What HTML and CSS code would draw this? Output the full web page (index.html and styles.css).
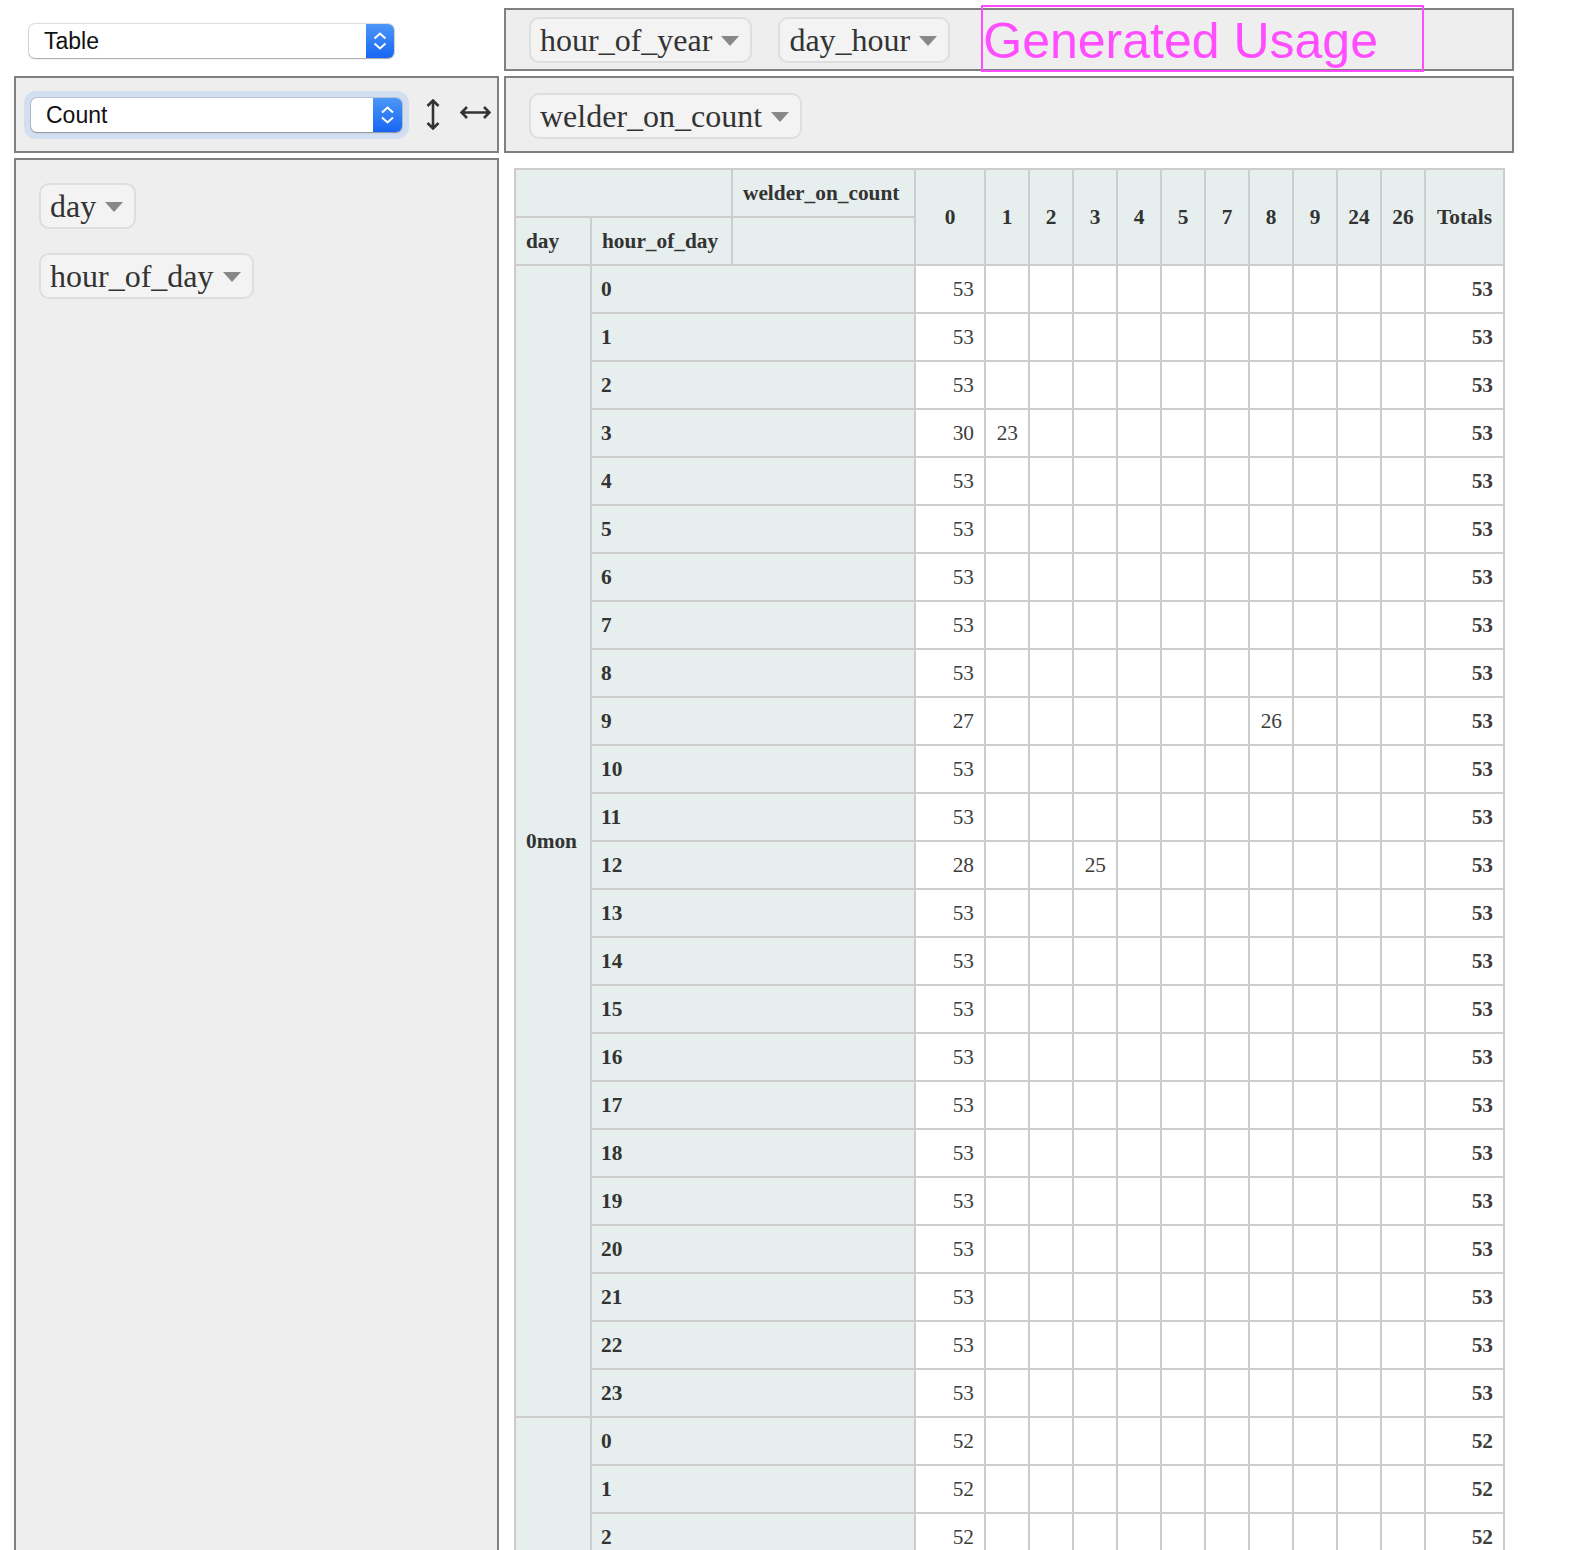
FILE: index.html
```html
<!DOCTYPE html>
<html>
<head>
<meta charset="utf-8">
<title>Pivot</title>
<link rel="stylesheet" href="styles.css">
</head>
<body>
<div class="page">
<div class="pvtUi">
  <div class="cell renderers">
    <div class="sel sel-table">
      <span class="sel-text">Table</span>
      <span class="step"><svg width="28" height="34" viewBox="0 0 28 34"><polyline points="8.5,14.5 14,9.5 19.5,14.5" fill="none" stroke="#fff" stroke-width="2"/><polyline points="8.5,19.5 14,24.5 19.5,19.5" fill="none" stroke="#fff" stroke-width="2"/></svg></span>
    </div>
  </div>
  <div class="cell box unused">
    <span class="pvtAttr">hour_of_year<span class="tri"></span></span>
    <span class="pvtAttr">day_hour<span class="tri"></span></span>
    <div class="title-box">Generated Usage</div>
  </div>
  <div class="cell box vals">
    <div class="ring">
      <div class="sel sel-count">
        <span class="sel-text">Count</span>
        <span class="step"><svg width="29" height="34" viewBox="0 0 29 34"><polyline points="9,14.5 14.5,9.5 20,14.5" fill="none" stroke="#fff" stroke-width="2"/><polyline points="9,19.5 14.5,24.5 20,19.5" fill="none" stroke="#fff" stroke-width="2"/></svg></span>
      </div>
    </div>
    <svg class="order-v" width="14" height="31" viewBox="0 0 14 31"><path d="M7 1.5V29.5M1.5 7L7 1.5L12.5 7M1.5 24L7 29.5L12.5 24" fill="none" stroke="#333" stroke-width="2.6"/></svg>
    <svg class="order-h" width="31" height="13" viewBox="0 0 31 13"><path d="M1.5 6.5H29.5M7 1L1.5 6.5L7 12M24 1L29.5 6.5L24 12" fill="none" stroke="#333" stroke-width="2.6"/></svg>
  </div>
  <div class="cell box cols">
    <span class="pvtAttr">welder_on_count<span class="tri"></span></span>
  </div>
  <div class="cell box rows">
    <span class="pvtAttr">day<span class="tri"></span></span>
    <span class="pvtAttr">hour_of_day<span class="tri"></span></span>
  </div>
  <div class="cell output">
    <table class="pvtTable">
      <thead>
        <tr>
          <th colspan="2"></th>
          <th class="axis w-attr">welder_on_count</th>
          <th class="colLabel w-c0" rowspan="2">0</th>
          <th class="colLabel w-cn" rowspan="2">1</th>
          <th class="colLabel w-cn" rowspan="2">2</th>
          <th class="colLabel w-cn" rowspan="2">3</th>
          <th class="colLabel w-cn" rowspan="2">4</th>
          <th class="colLabel w-cn" rowspan="2">5</th>
          <th class="colLabel w-cn" rowspan="2">7</th>
          <th class="colLabel w-cn" rowspan="2">8</th>
          <th class="colLabel w-cn" rowspan="2">9</th>
          <th class="colLabel w-cn" rowspan="2">24</th>
          <th class="colLabel w-cn" rowspan="2">26</th>
          <th class="colLabel w-tot" rowspan="2">Totals</th>
        </tr>
        <tr>
          <th class="axis w-day">day</th>
          <th class="axis w-hour">hour_of_day</th>
          <th></th>
        </tr>
      </thead>
      <tbody>
        <tr><th class="dayLabel" rowspan="24">0mon</th><th class="rowLabel" colspan="2">0</th><td>53</td><td></td><td></td><td></td><td></td><td></td><td></td><td></td><td></td><td></td><td></td><td class="tot">53</td></tr>
        <tr><th class="rowLabel" colspan="2">1</th><td>53</td><td></td><td></td><td></td><td></td><td></td><td></td><td></td><td></td><td></td><td></td><td class="tot">53</td></tr>
        <tr><th class="rowLabel" colspan="2">2</th><td>53</td><td></td><td></td><td></td><td></td><td></td><td></td><td></td><td></td><td></td><td></td><td class="tot">53</td></tr>
        <tr><th class="rowLabel" colspan="2">3</th><td>30</td><td>23</td><td></td><td></td><td></td><td></td><td></td><td></td><td></td><td></td><td></td><td class="tot">53</td></tr>
        <tr><th class="rowLabel" colspan="2">4</th><td>53</td><td></td><td></td><td></td><td></td><td></td><td></td><td></td><td></td><td></td><td></td><td class="tot">53</td></tr>
        <tr><th class="rowLabel" colspan="2">5</th><td>53</td><td></td><td></td><td></td><td></td><td></td><td></td><td></td><td></td><td></td><td></td><td class="tot">53</td></tr>
        <tr><th class="rowLabel" colspan="2">6</th><td>53</td><td></td><td></td><td></td><td></td><td></td><td></td><td></td><td></td><td></td><td></td><td class="tot">53</td></tr>
        <tr><th class="rowLabel" colspan="2">7</th><td>53</td><td></td><td></td><td></td><td></td><td></td><td></td><td></td><td></td><td></td><td></td><td class="tot">53</td></tr>
        <tr><th class="rowLabel" colspan="2">8</th><td>53</td><td></td><td></td><td></td><td></td><td></td><td></td><td></td><td></td><td></td><td></td><td class="tot">53</td></tr>
        <tr><th class="rowLabel" colspan="2">9</th><td>27</td><td></td><td></td><td></td><td></td><td></td><td></td><td>26</td><td></td><td></td><td></td><td class="tot">53</td></tr>
        <tr><th class="rowLabel" colspan="2">10</th><td>53</td><td></td><td></td><td></td><td></td><td></td><td></td><td></td><td></td><td></td><td></td><td class="tot">53</td></tr>
        <tr><th class="rowLabel" colspan="2">11</th><td>53</td><td></td><td></td><td></td><td></td><td></td><td></td><td></td><td></td><td></td><td></td><td class="tot">53</td></tr>
        <tr><th class="rowLabel" colspan="2">12</th><td>28</td><td></td><td></td><td>25</td><td></td><td></td><td></td><td></td><td></td><td></td><td></td><td class="tot">53</td></tr>
        <tr><th class="rowLabel" colspan="2">13</th><td>53</td><td></td><td></td><td></td><td></td><td></td><td></td><td></td><td></td><td></td><td></td><td class="tot">53</td></tr>
        <tr><th class="rowLabel" colspan="2">14</th><td>53</td><td></td><td></td><td></td><td></td><td></td><td></td><td></td><td></td><td></td><td></td><td class="tot">53</td></tr>
        <tr><th class="rowLabel" colspan="2">15</th><td>53</td><td></td><td></td><td></td><td></td><td></td><td></td><td></td><td></td><td></td><td></td><td class="tot">53</td></tr>
        <tr><th class="rowLabel" colspan="2">16</th><td>53</td><td></td><td></td><td></td><td></td><td></td><td></td><td></td><td></td><td></td><td></td><td class="tot">53</td></tr>
        <tr><th class="rowLabel" colspan="2">17</th><td>53</td><td></td><td></td><td></td><td></td><td></td><td></td><td></td><td></td><td></td><td></td><td class="tot">53</td></tr>
        <tr><th class="rowLabel" colspan="2">18</th><td>53</td><td></td><td></td><td></td><td></td><td></td><td></td><td></td><td></td><td></td><td></td><td class="tot">53</td></tr>
        <tr><th class="rowLabel" colspan="2">19</th><td>53</td><td></td><td></td><td></td><td></td><td></td><td></td><td></td><td></td><td></td><td></td><td class="tot">53</td></tr>
        <tr><th class="rowLabel" colspan="2">20</th><td>53</td><td></td><td></td><td></td><td></td><td></td><td></td><td></td><td></td><td></td><td></td><td class="tot">53</td></tr>
        <tr><th class="rowLabel" colspan="2">21</th><td>53</td><td></td><td></td><td></td><td></td><td></td><td></td><td></td><td></td><td></td><td></td><td class="tot">53</td></tr>
        <tr><th class="rowLabel" colspan="2">22</th><td>53</td><td></td><td></td><td></td><td></td><td></td><td></td><td></td><td></td><td></td><td></td><td class="tot">53</td></tr>
        <tr><th class="rowLabel" colspan="2">23</th><td>53</td><td></td><td></td><td></td><td></td><td></td><td></td><td></td><td></td><td></td><td></td><td class="tot">53</td></tr>
        <tr><th class="dayLabel" rowspan="24">1tue</th><th class="rowLabel" colspan="2">0</th><td>52</td><td></td><td></td><td></td><td></td><td></td><td></td><td></td><td></td><td></td><td></td><td class="tot">52</td></tr>
        <tr><th class="rowLabel" colspan="2">1</th><td>52</td><td></td><td></td><td></td><td></td><td></td><td></td><td></td><td></td><td></td><td></td><td class="tot">52</td></tr>
        <tr><th class="rowLabel" colspan="2">2</th><td>52</td><td></td><td></td><td></td><td></td><td></td><td></td><td></td><td></td><td></td><td></td><td class="tot">52</td></tr>
        <tr><th class="rowLabel" colspan="2">3</th><td>52</td><td></td><td></td><td></td><td></td><td></td><td></td><td></td><td></td><td></td><td></td><td class="tot">52</td></tr>
        <tr><th class="rowLabel" colspan="2">4</th><td>52</td><td></td><td></td><td></td><td></td><td></td><td></td><td></td><td></td><td></td><td></td><td class="tot">52</td></tr>
        <tr><th class="rowLabel" colspan="2">5</th><td>52</td><td></td><td></td><td></td><td></td><td></td><td></td><td></td><td></td><td></td><td></td><td class="tot">52</td></tr>
        <tr><th class="rowLabel" colspan="2">6</th><td>52</td><td></td><td></td><td></td><td></td><td></td><td></td><td></td><td></td><td></td><td></td><td class="tot">52</td></tr>
        <tr><th class="rowLabel" colspan="2">7</th><td>52</td><td></td><td></td><td></td><td></td><td></td><td></td><td></td><td></td><td></td><td></td><td class="tot">52</td></tr>
        <tr><th class="rowLabel" colspan="2">8</th><td>52</td><td></td><td></td><td></td><td></td><td></td><td></td><td></td><td></td><td></td><td></td><td class="tot">52</td></tr>
        <tr><th class="rowLabel" colspan="2">9</th><td>52</td><td></td><td></td><td></td><td></td><td></td><td></td><td></td><td></td><td></td><td></td><td class="tot">52</td></tr>
        <tr><th class="rowLabel" colspan="2">10</th><td>52</td><td></td><td></td><td></td><td></td><td></td><td></td><td></td><td></td><td></td><td></td><td class="tot">52</td></tr>
        <tr><th class="rowLabel" colspan="2">11</th><td>52</td><td></td><td></td><td></td><td></td><td></td><td></td><td></td><td></td><td></td><td></td><td class="tot">52</td></tr>
      </tbody>
    </table>
  </div>
</div>
</div>
</body>
</html>
```

FILE: styles.css
```css
html, body {
  margin: 0;
  padding: 0;
  background: #fff;
}
body {
  overflow: hidden;
}
.page {
  height: 1550px;
  overflow: hidden;
}
.pvtUi {
  display: grid;
  grid-template-columns: 485px 1010px;
  grid-template-rows: 63px 77px auto;
  column-gap: 5px;
  row-gap: 5px;
  margin: 8px 0 0 14px;
  color: #333;
  font-family: "Liberation Serif", serif;
}
.cell {
  box-sizing: border-box;
  min-width: 0;
}
.box {
  border: 2px solid #808080;
  background: #eeeeee;
}

/* native-looking selects */
.renderers {
  display: flex;
  align-items: center;
  padding: 2px 0 0 15px;
}
.sel {
  box-sizing: border-box;
  display: flex;
  align-items: center;
  height: 34px;
  background: #fff;
  border-radius: 6px;
  box-shadow: 0 0 0 1px rgba(0,0,0,0.13), 0 1px 1.5px rgba(0,0,0,0.25);
  font-family: "Liberation Sans", Arial, sans-serif;
  font-size: 23px;
  color: #111;
  overflow: hidden;
}
.sel-text {
  flex: 1;
  padding-left: 15px;
  line-height: 34px;
}
.sel-table {
  width: 365px;
}
.sel-count {
  width: 371px;
}
.sel-count .sel-text {
  padding-left: 15px;
}
.step {
  display: flex;
  align-self: stretch;
  background: linear-gradient(#4d97f8, #1766f3);
}
.step svg {
  display: block;
}

/* aggregator box */
.vals {
  display: flex;
  align-items: center;
  padding-left: 8px;
}
.ring {
  padding: 7px;
  border-radius: 12px;
  background: #d3dff1;
}
.order-v {
  margin-left: 17px;
  display: block;
}
.order-h {
  margin-left: 20px;
  margin-top: -4px;
  display: block;
}

/* attribute pills */
.pvtAttr {
  box-sizing: border-box;
  display: inline-flex;
  align-items: center;
  height: 46px;
  padding: 0 11px 0 9px;
  background: #f3f3f3;
  border: 2px solid #dedede;
  border-radius: 10px;
  font-size: 32px;
  line-height: 36px;
  color: #333;
  white-space: nowrap;
}
.tri {
  display: inline-block;
  width: 0;
  height: 0;
  margin-left: 9px;
  margin-top: 2px;
  border-left: 9.5px solid transparent;
  border-right: 9.5px solid transparent;
  border-top: 10px solid #888;
}

.unused {
  display: flex;
  align-items: flex-start;
  padding: 7px 0 0 23px;
}
.unused .pvtAttr + .pvtAttr {
  margin-left: 26px;
}
.title-box {
  box-sizing: border-box;
  margin-top: -12px;
  margin-left: 31px;
  width: 443px;
  height: 67px;
  border: 2px solid #ff4dff;
  color: #ff4dff;
  font-family: "Liberation Sans", Arial, sans-serif;
  font-size: 50px;
  line-height: 68px;
  padding-left: 0;
  white-space: nowrap;
}

.cols {
  padding: 15px 0 0 23px;
}

.rows {
  display: flex;
  flex-direction: column;
  align-items: flex-start;
  gap: 24px;
  padding: 23px 0 0 23px;
}

/* output table */
.output {
  padding: 10px 0 0 10px;
}
.pvtTable {
  border-collapse: collapse;
  font-family: "Liberation Serif", serif;
  font-size: 21.33px;
  line-height: 26px;
}
.pvtTable th {
  background: #e6eeee;
  border: 2px solid #cdcdcd;
  padding: 10px;
  color: #333;
  font-weight: bold;
  text-align: left;
}
.pvtTable td {
  background: #fff;
  border: 2px solid #cdcdcd;
  padding: 10px;
  color: #3d3d3d;
  text-align: right;
  vertical-align: top;
}
.pvtTable td.tot {
  font-weight: bold;
}
.pvtTable th.colLabel {
  text-align: center;
}
.pvtTable th.rowLabel {
  vertical-align: top;
  padding-left: 9px;
}
.pvtTable th.dayLabel {
  vertical-align: middle;
}
.w-day { width: 54px; }
.w-hour { width: 119px; }
.w-attr { width: 161px; }
.w-c0 { width: 48px; }
.w-cn { width: 22px; }
.w-tot { width: 57px; }
```
